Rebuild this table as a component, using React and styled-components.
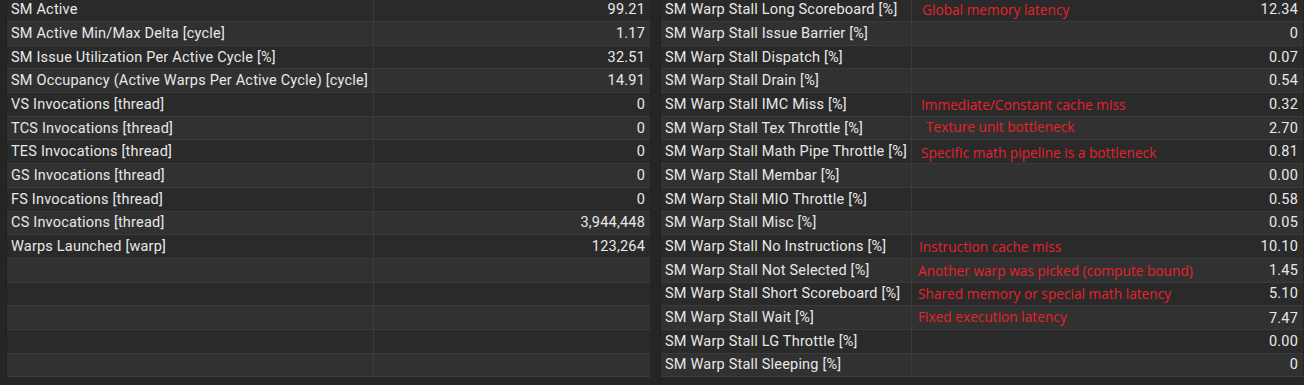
import React from 'react'
import styled, { createGlobalStyle } from 'styled-components'

const GlobalStyle = createGlobalStyle`
  html, body {
    margin: 0;
    padding: 0;
    background: #252525;
  }
  body {
    font-family: Roboto, "Liberation Sans", sans-serif;
  }
`

const Page = styled.div`
  display: flex;
  gap: 10px;
  height: 385px;
  padding-left: 6px;
  margin-top: -1.7px;
  background: #252525;
  overflow: hidden;
`

const Table = styled.div`
  display: flex;
  flex-direction: column;
  width: ${p => p.width}px;
  background: #262626;
  border-left: 1px solid #1f1f1f;
`

const Row = styled.div`
  display: grid;
  grid-template-columns: ${p => p.cols};
  height: 23.7px;
  box-sizing: border-box;
  border-bottom: 1px solid #3b3b3b;
  background: ${p => (p.odd ? '#313131' : '#2a2a2a')};
`

const Cell = styled.div`
  display: flex;
  align-items: center;
  justify-content: ${p => (p.right ? 'flex-end' : 'flex-start')};
  padding: 0 5px 0 4px;
  border-right: ${p => (p.last ? 'none' : '1px solid #3b3b3b')};
  color: #e8e8e8;
  font-size: 14.5px;
  letter-spacing: 0.2px;
  white-space: nowrap;
  overflow: hidden;
`

const Note = styled.span`
  flex: 1;
  padding-left: ${p => p.indent}px;
  margin-top: ${p => p.lift}px;
  color: #e8212b;
  font-family: "Open Sans", "Noto Sans", sans-serif;
  font-size: 13.7px;
  letter-spacing: 0;
`

const Value = styled.span`
  margin-top: ${p => p.lift || 0}px;
`

const leftRows = [
  ['SM Active', '99.21'],
  ['SM Active Min/Max Delta [cycle]', '1.17'],
  ['SM Issue Utilization Per Active Cycle [%]', '32.51'],
  ['SM Occupancy (Active Warps Per Active Cycle) [cycle]', '14.91'],
  ['VS Invocations [thread]', '0'],
  ['TCS Invocations [thread]', '0'],
  ['TES Invocations [thread]', '0'],
  ['GS Invocations [thread]', '0'],
  ['FS Invocations [thread]', '0'],
  ['CS Invocations [thread]', '3,944,448'],
  ['Warps Launched [warp]', '123,264'],
  ['', ''],
  ['', ''],
  ['', ''],
  ['', ''],
  ['', ''],
]

const rightRows = [
  ['SM Warp Stall Long Scoreboard [%]', 'Global memory latency', '12.34', 6, -1],
  ['SM Warp Stall Issue Barrier [%]', '', '0'],
  ['SM Warp Stall Dispatch [%]', '', '0.07'],
  ['SM Warp Stall Drain [%]', '', '0.54'],
  ['SM Warp Stall IMC Miss [%]', 'Immediate/Constant cache miss', '0.32', 5, 0],
  ['SM Warp Stall Tex Throttle [%]', 'Texture unit bottleneck', '2.70', 10, -3],
  ['SM Warp Stall Math Pipe Throttle [%]', 'Specific math pipeline is a bottleneck', '0.81', 5, 2],
  ['SM Warp Stall Membar [%]', '', '0.00'],
  ['SM Warp Stall MIO Throttle [%]', '', '0.58'],
  ['SM Warp Stall Misc [%]', '', '0.05'],
  ['SM Warp Stall No Instructions [%]', 'Instruction cache miss', '10.10', 3, 0],
  ['SM Warp Stall Not Selected [%]', 'Another warp was picked (compute bound)', '1.45', 2, 0],
  ['SM Warp Stall Short Scoreboard [%]', 'Shared memory or special math latency', '5.10', 2, 0],
  ['SM Warp Stall Wait [%]', 'Fixed execution latency', '7.47', 2, -3],
  ['SM Warp Stall LG Throttle [%]', '', '0.00'],
  ['SM Warp Stall Sleeping [%]', '', '0'],
]

export default function App() {
  return (
    <>
      <GlobalStyle />
      <Page>
        <Table width={643}>
          {leftRows.map(([label, value], i) => (
            <Row key={i} odd={i % 2 === 1} cols="367px 1fr">
              <Cell>{label}</Cell>
              <Cell right last>{value}</Cell>
            </Row>
          ))}
        </Table>
        <Table width={642}>
          {rightRows.map(([label, note, value, indent, lift], i) => (
            <Row key={i} odd={i % 2 === 1} cols="251px 1fr">
              <Cell>{label}</Cell>
              <Cell last>
                <Note indent={indent || 0} lift={lift || 0}>{note}</Note>
                <Value lift={i === 13 ? 2 : 0}>{value}</Value>
              </Cell>
            </Row>
          ))}
        </Table>
      </Page>
    </>
  )
}
